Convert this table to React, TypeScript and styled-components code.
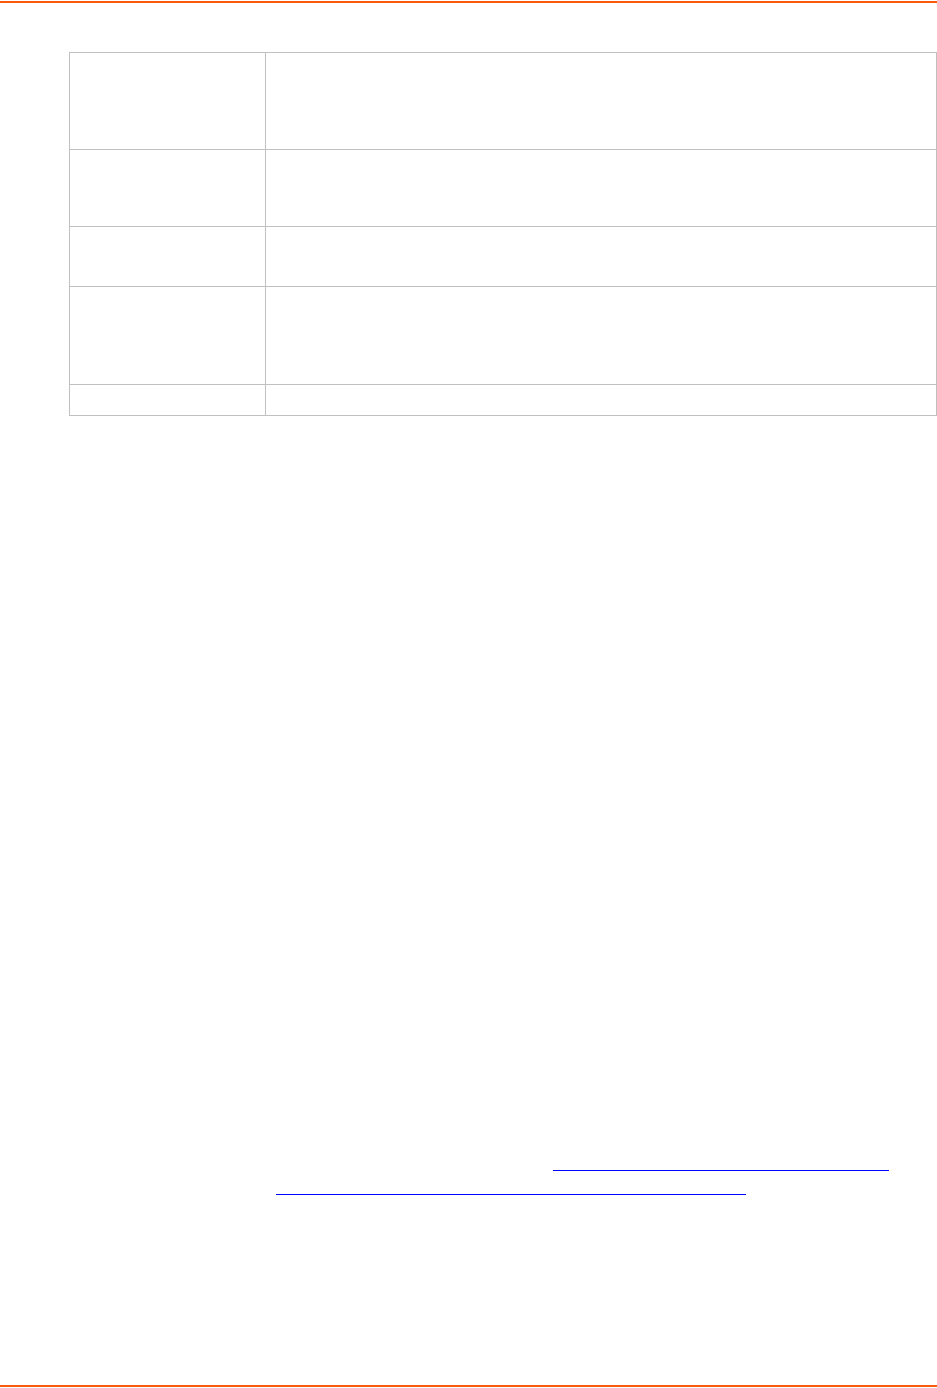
import styled, { createGlobalStyle } from "styled-components";

const colors = {
  accent: "#fa5a0c",
  rule: "#c0c0c0",
  link: "#0000ff",
};

const GlobalStyle = createGlobalStyle`
  html, body {
    margin: 0;
    padding: 0;
    background: #ffffff;
    font-family: "Liberation Sans", Arial, sans-serif;
  }
`;

const rows = [97, 77, 60, 98, 31];

const App: React.FC = () => {
  return (
    <Page>
      <GlobalStyle />
      <TopRule />
      <Content>
        <InfoTable>
          {rows.map((h, i) => (
            <Row key={i} height={h}>
              <LabelCell />
              <ValueCell />
            </Row>
          ))}
        </InfoTable>
        <LinkBlock>
          <LinkLine href="#" indent={277} width={336} aria-label="link" />
          <LinkLine href="#" indent={0} width={470} aria-label="link" />
        </LinkBlock>
      </Content>
      <BottomRule />
    </Page>
  );
};

export default App;

const Page = styled.div`
  height: 1388px;
  display: flex;
  flex-direction: column;
  overflow: hidden;
`;

const TopRule = styled.div`
  margin-top: 1px;
  height: 2px;
  background: ${colors.accent};
`;

const BottomRule = styled.div`
  height: 2px;
  margin-bottom: 1px;
  background: ${colors.accent};
`;

const Content = styled.main`
  flex: 1;
  display: flex;
  flex-direction: column;
  padding-top: 49px;
`;

const InfoTable = styled.div`
  margin-left: 69px;
  width: 868px;
  box-sizing: border-box;
  border-top: 1px solid ${colors.rule};
  border-left: 1px solid ${colors.rule};
  display: flex;
  flex-direction: column;
`;

const Row = styled.div<{ height: number }>`
  display: grid;
  grid-template-columns: 196px 671px;
  height: ${({ height }) => height}px;
`;

const Cell = styled.div`
  box-sizing: border-box;
  border-right: 1px solid ${colors.rule};
  border-bottom: 1px solid ${colors.rule};
  padding: 4px 6px;
  font-size: 13px;
  color: #000;
`;

const LabelCell = styled(Cell)``;

const ValueCell = styled(Cell)``;

const LinkBlock = styled.div`
  margin-top: 754px;
  padding-left: 276px;
  display: flex;
  flex-direction: column;
  gap: 23px;
`;

const LinkLine = styled.a<{ indent: number; width: number }>`
  display: block;
  margin-left: ${({ indent }) => indent}px;
  width: ${({ width }) => width}px;
  height: 0;
  border-bottom: 1px solid ${colors.link};
`;
